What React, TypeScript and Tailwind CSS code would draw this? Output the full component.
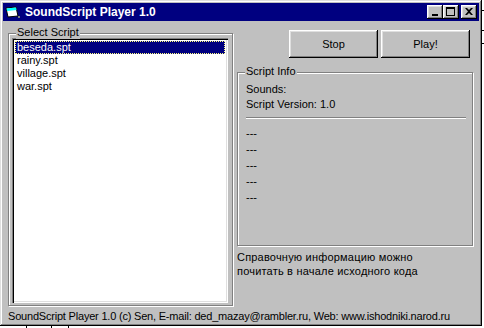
import React, { useState } from 'react';

const scripts = ['beseda.spt', 'rainy.spt', 'village.spt', 'war.spt'];

const raised =
  'shadow-[inset_-1px_-1px_#000,inset_1px_1px_#fff,inset_-2px_-2px_#808080,inset_2px_2px_#dfdfdf]';

const TitleButton: React.FC<{ children: React.ReactNode; className?: string }> = ({ children, className }) => (
  <div className={`w-[16px] h-[14px] bg-[#c0c0c0] flex items-center justify-center ${raised} ${className ?? ''}`}>
    {children}
  </div>
);

const GroupBox: React.FC<{ label: string; className?: string; children: React.ReactNode }> = ({
  label,
  className,
  children,
}) => (
  <div className={`relative border border-[#808080] shadow-[inset_1px_1px_#fff,1px_1px_#fff] ${className ?? ''}`}>
    <span className="absolute left-[7px] top-[-8px] px-[1px] bg-[#c0c0c0] leading-[13px]">{label}</span>
    {children}
  </div>
);

export default function App() {
  const [selected, setSelected] = useState(0);

  return (
    <div
      className="relative w-[484px] h-[328px] bg-white overflow-hidden text-[11px] text-black"
      style={{ fontFamily: '"Liberation Sans", Arial, sans-serif' }}
    >
      {/* bits of the desktop behind the window */}
      <div className="absolute left-[482px] top-[10px] w-[2px] h-[1px] bg-black" />
      <div className="absolute left-[482px] top-[30px] w-[2px] h-[1px] bg-black" />
      <div className="absolute left-[482px] top-[43px] w-[2px] h-[1px] bg-black" />
      <div className="absolute left-[26px] top-[326px] w-[1px] h-[2px] bg-black" />
      <div className="absolute left-[51px] top-[326px] w-[1px] h-[2px] bg-black" />
      <div className="absolute left-[68px] top-[326px] w-[1px] h-[2px] bg-black" />

      <div className="w-[482px] h-[326px] bg-[#c0c0c0] p-[3px] flex flex-col shadow-[inset_-1px_-1px_#000,inset_1px_1px_#dfdfdf,inset_-2px_-2px_#808080,inset_2px_2px_#fff]">
        {/* title bar */}
        <div className="h-[18px] bg-[#000080] flex items-center pl-[2px] pr-[2px]">
          <svg width="16" height="14" viewBox="0 0 16 14" className="mr-[4px]">
            <path d="M1 3 L11 2 L13 11 L3 12 Z" fill="#fff" stroke="#000" strokeWidth="1" />
            <path d="M1.5 3.5 L11 2.5 L11.6 5 L2 6 Z" fill="#00ffff" />
            <rect x="13" y="11" width="2" height="2" fill="#808080" />
          </svg>
          <span className="text-white font-bold text-[12px] leading-none">SoundScript Player 1.0</span>
          <div className="ml-auto flex items-center">
            <TitleButton>
              <div className="w-[6px] h-[2px] bg-black mt-[6px] mr-[1px]" />
            </TitleButton>
            <TitleButton>
              <div className="w-[9px] h-[9px] border border-black border-t-2 mb-[1px] mr-[1px]" />
            </TitleButton>
            <TitleButton className="ml-[2px]">
              <svg width="8" height="7" viewBox="0 0 8 7" className="mr-[1px] mb-[1px]">
                <path d="M0 0h2l2 2 2-2h2L5 3.5 8 7H6L4 5 2 7H0l3-3.5Z" fill="#000" />
              </svg>
            </TitleButton>
          </div>
        </div>

        {/* body */}
        <div className="flex-1 flex flex-col pl-[5px]">
          <div className="flex">
            <GroupBox label="Select Script" className="mt-[12px] w-[225px] h-[273px] pt-[4px] pl-[3px]">
              <div className="w-[216px] h-[265px] bg-white p-[3px] shadow-[inset_1px_1px_#808080,inset_2px_2px_#000,inset_-1px_-1px_#fff,inset_-2px_-2px_#dfdfdf]">
                {scripts.map((s, i) => (
                  <div
                    key={s}
                    onClick={() => setSelected(i)}
                    className={`h-[13px] leading-[13px] pl-[2px] ${
                      i === selected ? 'bg-[#000080] text-white outline-1 outline-dotted outline-[#ffff7f] -outline-offset-1' : ''
                    }`}
                  >
                    {s}
                  </div>
                ))}
              </div>
            </GroupBox>

            <div className="ml-[4px] w-[236px] flex flex-col">
              <div className="flex justify-end gap-[3px] mt-[9px] pr-[3px]">
                <button className={`w-[89px] h-[28px] bg-[#c0c0c0] ${raised}`}>Stop</button>
                <button className={`w-[89px] h-[28px] bg-[#c0c0c0] ${raised}`}>Play!</button>
              </div>
              <GroupBox label="Script Info" className="mt-[14px] w-[236px] h-[174px] pl-[8px] pt-[9px]">
                <div className="leading-[15px]">Sounds:</div>
                <div className="leading-[15px]">Script Version: 1.0</div>
                <div className="mt-[5px] mr-[6px] h-[2px] border-t border-[#808080] border-b border-b-white" />
                <div className="mt-[6px] flex flex-col">
                  {[0, 1, 2, 3, 4].map((i) => (
                    <div key={i} className="leading-[16px]">---</div>
                  ))}
                </div>
              </GroupBox>
              <div className="mt-[4px] leading-[14px] tracking-[0.2px]">
                Справочную информацию можно
                <br />
                почитать в начале исходного кода
              </div>
            </div>
          </div>
          <div className="mt-[4px] leading-[13px] whitespace-nowrap tracking-[-0.2px]">
            SoundScript Player 1.0 (c) Sen, E-mail: ded_mazay@rambler.ru, Web: www.ishodniki.narod.ru
          </div>
        </div>
      </div>
    </div>
  );
}
